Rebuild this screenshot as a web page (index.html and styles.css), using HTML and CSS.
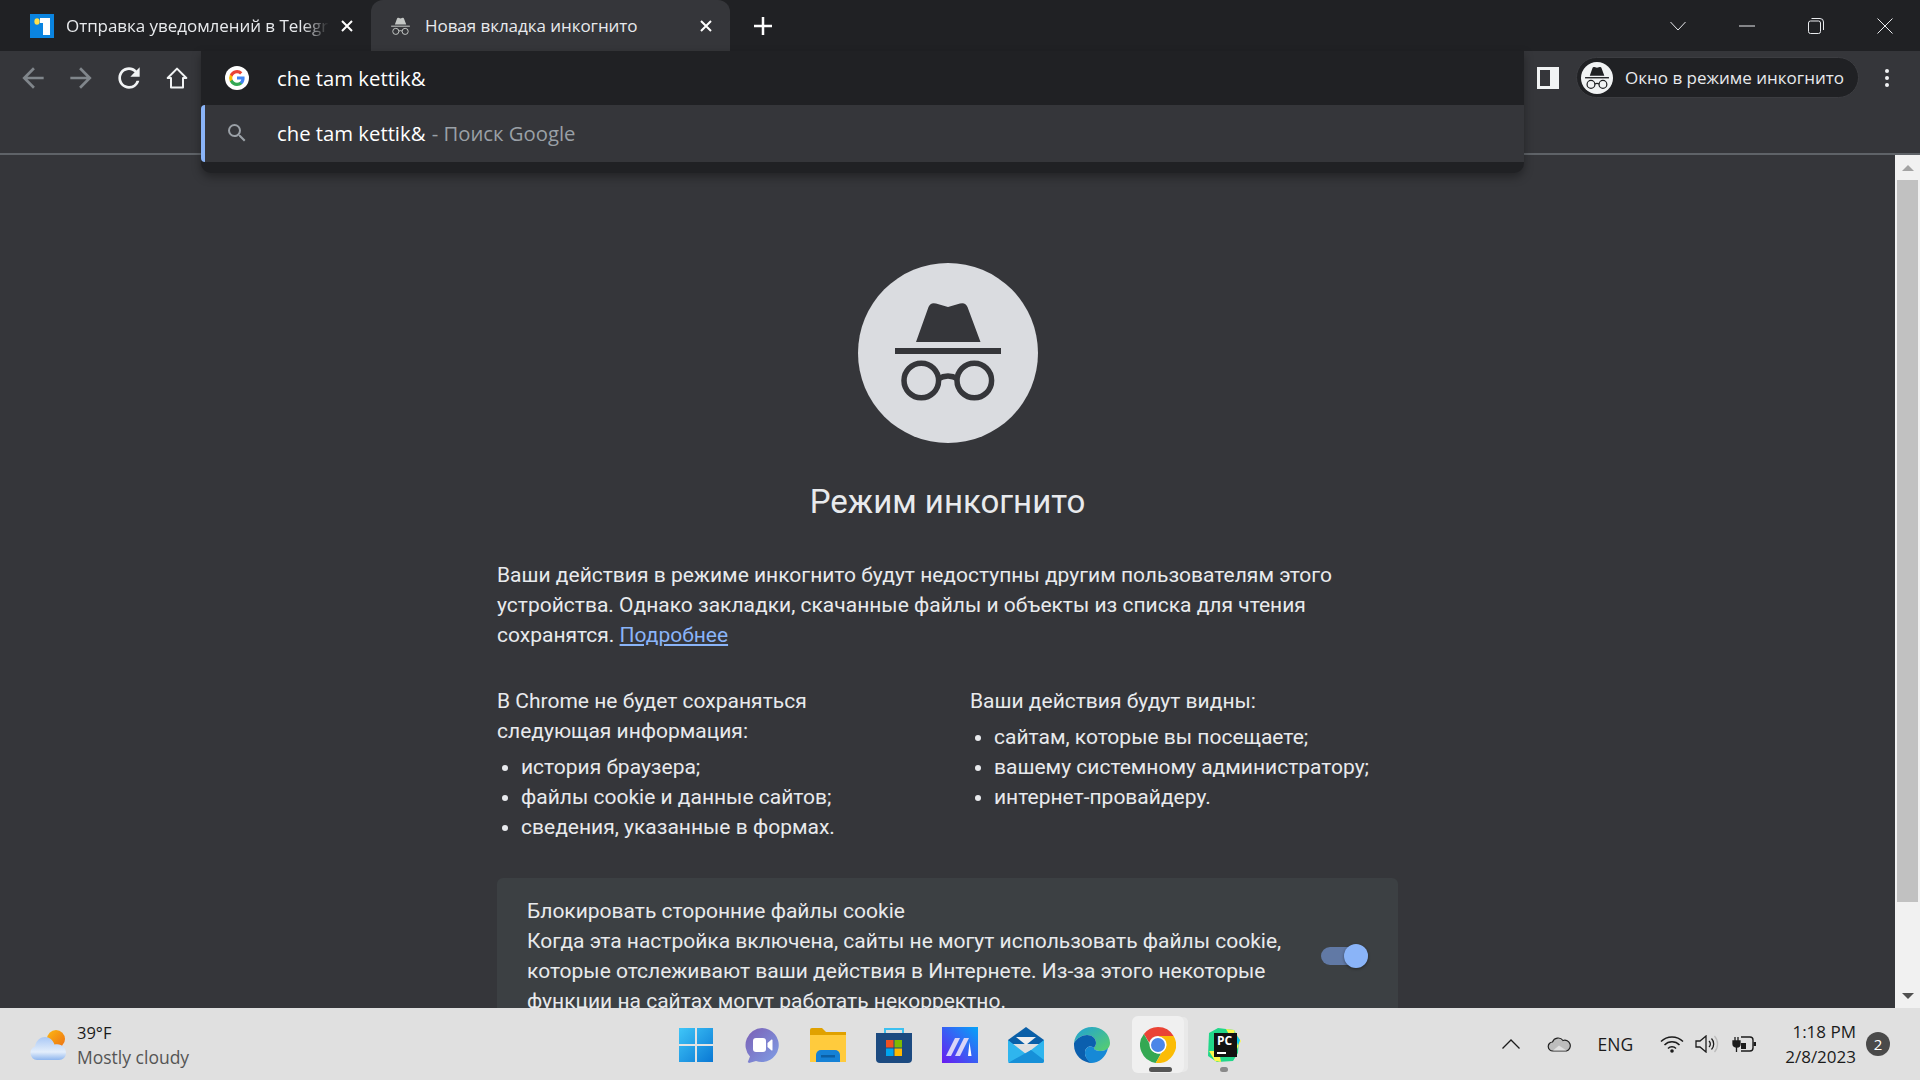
FILE: index.html
```html
<!DOCTYPE html>
<html lang="ru">
<head>
    <meta charset="UTF-8">
    <title>Новая вкладка инкогнито</title>
    <link rel="stylesheet" href="styles.css">
</head>
<body>
    <svg class="defs" width="0" height="0">
        <symbol id="spy" viewBox="0 0 106 102">
            <path d="M21 43 L33.500 8 Q35.500 3 41 4.500 L53 8 L65 4.500 Q70.500 3 72.500 8 L85.500 43 Z"/>
            <rect x="0" y="49" width="106" height="6"/>
            <g fill="none" stroke="currentColor" stroke-width="5.500">
                <circle cx="26.300" cy="81.500" r="17.300"/>
                <circle cx="79.300" cy="81.500" r="17.300"/>
                <path d="M43 80 Q53 74 63 80"/>
            </g>
        </symbol>
    </svg>

    <div class="tabstrip">
        <div class="tab tab-first">
            <svg class="favicon" viewBox="0 0 24 24"><rect width="24" height="24" fill="#0a84e0"/><rect x="13" y="4" width="7" height="17" fill="#fff"/><path d="M10 4h3v5h-3z" fill="#fff"/><ellipse cx="7" cy="7.500" rx="2.600" ry="3.200" fill="#ffe04a"/></svg>
            <span class="tab-title fade">Отправка уведомлений в Telegram</span>
            <svg class="tab-close" viewBox="0 0 12 12"><path d="M1 1l10 10M11 1L1 11"/></svg>
        </div>
        <div class="tab tab-active">
            <svg class="tab-spy"><use href="#spy"/></svg>
            <span class="tab-title">Новая вкладка инкогнито</span>
            <svg class="tab-close" viewBox="0 0 12 12"><path d="M1 1l10 10M11 1L1 11"/></svg>
        </div>
        <svg class="new-tab" viewBox="0 0 18 18"><path d="M9 0v18M0 9h18"/></svg>
        <div class="win-controls">
            <svg class="win-btn chevron" viewBox="0 0 16 10"><path d="M.5 1L8 9l7.500-8"/></svg>
            <svg class="win-btn minimize" viewBox="0 0 16 2"><path d="M0 1h16"/></svg>
            <svg class="win-btn restore" viewBox="0 0 16 16"><rect x=".5" y="3" width="12" height="12.500" rx="2"/><path d="M3.500.5H12a3.500 3.500 0 0 1 3.500 3.500v8"/></svg>
            <svg class="win-btn close" viewBox="0 0 16 16"><path d="M.5.5l15 15M15.500.5l-15 15"/></svg>
        </div>
    </div>

    <div class="toolbar">
        <div class="nav">
            <svg class="nav-icon dim" viewBox="0 0 24 24"><path d="M20 11H7.830l5.590-5.590L12 4l-8 8 8 8 1.410-1.410L7.830 13H20v-2z"/></svg>
            <svg class="nav-icon dim" viewBox="0 0 24 24"><path d="M12 4l-1.410 1.410L16.170 11H4v2h12.170l-5.580 5.590L12 20l8-8z"/></svg>
            <svg class="nav-icon" viewBox="0 0 24 24"><path d="M17.650 6.350A7.958 7.958 0 0 0 12 4c-4.420 0-7.990 3.580-7.990 8s3.570 8 7.990 8c3.730 0 6.840-2.550 7.730-6h-2.080A5.990 5.990 0 0 1 12 18c-3.310 0-6-2.690-6-6s2.690-6 6-6c1.660 0 3.140.69 4.220 1.780L13 11h7V4l-2.350 2.350z"/></svg>
            <svg class="nav-icon" viewBox="0 0 24 24"><path d="M12 5L5 12H7.500V19.200H16.500V12H19Z" fill="none" stroke="currentColor" stroke-width="1.500" stroke-linejoin="round"/></svg>
        </div>
        <div class="tool-right">
            <svg class="side-panel" viewBox="0 0 22 22"><path fill-rule="evenodd" d="M0 0h22v22H0zM3 3v16h10V3z"/></svg>
            <div class="profile">
                <span class="profile-pic"><svg><use href="#spy"/></svg></span>
                <span>Окно в режиме инкогнито</span>
            </div>
            <div class="dots"><i></i><i></i><i></i></div>
        </div>

        <div class="omnibox">
            <div class="omni-input">
                <svg class="google" viewBox="0 0 24 24">
                    <circle cx="12" cy="12" r="12" fill="#fff"/>
                    <path d="M19.600 12.200c0-.6-.05-1.100-.15-1.600H12v3h4.300a3.700 3.700 0 0 1-1.600 2.400v2h2.550c1.500-1.400 2.350-3.400 2.350-5.800z" fill="#4285f4"/>
                    <path d="M12 20c2.150 0 3.950-.7 5.250-1.950l-2.550-2c-.7.500-1.600.75-2.700.75-2.100 0-3.850-1.400-4.500-3.300H4.900v2.050A8 8 0 0 0 12 20z" fill="#34a853"/>
                    <path d="M7.500 13.500a4.800 4.800 0 0 1 0-3V8.450H4.900a8 8 0 0 0 0 7.100z" fill="#fbbc05"/>
                    <path d="M12 7.200c1.200 0 2.250.4 3.100 1.200l2.250-2.250A8 8 0 0 0 4.900 8.450L7.500 10.500c.65-1.900 2.400-3.300 4.500-3.300z" fill="#ea4335"/>
                </svg>
                <span>che tam kettik&amp;</span>
            </div>
            <div class="omni-row">
                <svg class="search" viewBox="0 0 24 24"><path d="M15.500 14h-.790l-.280-.270A6.471 6.471 0 0 0 16 9.500 6.500 6.500 0 1 0 9.500 16c1.610 0 3.090-.590 4.230-1.570l.270.280v.790l5 4.990L20.490 19l-4.990-5zm-6 0C7.010 14 5 11.990 5 9.500S7.010 5 9.500 5 14 7.010 14 9.500 11.990 14 9.500 14z"/></svg>
                <span>che tam kettik&amp;</span>
                <span class="omni-hint">&nbsp;- Поиск Google</span>
            </div>
        </div>
    </div>

    <div class="main">
        <div class="page">
            <div class="content">
                <div class="spy-circle"><svg><use href="#spy"/></svg></div>
                <h1>Режим инкогнито</h1>
                <p class="intro">Ваши действия в режиме инкогнито будут недоступны другим пользователям этого устройства. Однако закладки, скачанные файлы и объекты из списка для чтения сохранятся. <a href="#">Подробнее</a></p>
                <div class="columns">
                    <div class="column">
                        <p>В Chrome не будет сохраняться следующая информация:</p>
                        <ul>
                            <li>история браузера;</li>
                            <li>файлы cookie и данные сайтов;</li>
                            <li>сведения, указанные в формах.</li>
                        </ul>
                    </div>
                    <div class="column column-right">
                        <p>Ваши действия будут видны:</p>
                        <ul>
                            <li>сайтам, которые вы посещаете;</li>
                            <li>вашему системному администратору;</li>
                            <li>интернет-провайдеру.</li>
                        </ul>
                    </div>
                </div>
                <div class="cookie-card">
                    <div class="cookie-text">
                        <div>Блокировать сторонние файлы cookie</div>
                        <div>Когда эта настройка включена, сайты не могут использовать файлы cookie, которые отслеживают ваши действия в Интернете. Из-за этого некоторые функции на сайтах могут работать некорректно.</div>
                    </div>
                    <div class="toggle"><i></i></div>
                </div>
            </div>
        </div>
        <div class="scrollbar">
            <div class="arrow arrow-up"></div>
            <div class="track"><div class="thumb"></div></div>
            <div class="arrow arrow-down"></div>
        </div>
    </div>

    <div class="taskbar">
        <div class="weather">
            <svg class="weather-icon" viewBox="0 0 36 30">
                <defs>
                    <linearGradient id="cloud" x1="0" y1="0" x2="0" y2="1"><stop offset="0" stop-color="#a9c8f5"/><stop offset=".65" stop-color="#e4eefb"/><stop offset="1" stop-color="#8fb6ee"/></linearGradient>
                    <linearGradient id="sun" x1="0" y1="0" x2="1" y2="1"><stop offset="0" stop-color="#fdb813"/><stop offset="1" stop-color="#ec6f14"/></linearGradient>
                </defs>
                <circle cx="26" cy="9" r="9" fill="url(#sun)"/>
                <path d="M7 30a7 7 0 0 1-2-13.500C6 10 11 7 15 7c4.500 0 8 3 9.500 7.500C31 13 36 17 36 23c0 4-3 7-7 7z" fill="url(#cloud)"/>
            </svg>
            <div>
                <div class="temp">39°F</div>
                <div class="forecast">Mostly cloudy</div>
            </div>
        </div>

        <div class="apps">
            <div class="app">
                <svg viewBox="0 0 36 36"><defs><linearGradient id="win" x1="0" y1="0" x2="1" y2="1"><stop offset="0" stop-color="#3fc6f8"/><stop offset="1" stop-color="#0a78d4"/></linearGradient></defs><path fill="url(#win)" d="M1 1h34v34H1z"/><path d="M17 1h2v34h-2zM1 17h34v2H1z" fill="#e3e3e3"/></svg>
            </div>
            <div class="app">
                <svg viewBox="0 0 36 36"><defs><linearGradient id="teams" x1="0" y1="0" x2="1" y2="1"><stop offset="0" stop-color="#7b5fb5"/><stop offset="1" stop-color="#7f9fe6"/></linearGradient></defs><path fill="url(#teams)" d="M18 1a17 17 0 1 1-6 33l-7 2c-1 0-1.500-.7-1-1.500l2-5A17 17 0 0 1 18 1z"/><rect x="9" y="11" width="13" height="14" rx="3" fill="#fff"/><path d="M23.500 16l4-3.500c.5-.3 1 0 1 .5v10c0 .5-.5.8-1 .5l-4-3.500z" fill="#fff"/></svg>
            </div>
            <div class="app">
                <svg viewBox="0 0 36 36"><path d="M0 3a2 2 0 0 1 2-2h10l4 4h20v30H0z" fill="#e0a100"/><path d="M0 8h36v27H0z" fill="#ffcb3d"/><path d="M6 35v-7a5 5 0 0 1 5-5h14a5 5 0 0 1 5 5v7z" fill="#1581d6"/><rect x="11" y="28" width="14" height="2.500" fill="#0b5fa5"/></svg>
            </div>
            <div class="app">
                <svg viewBox="0 0 36 36"><path d="M9 6V2h18v4" fill="none" stroke="#3cc0f0" stroke-width="2"/><path d="M0 6h36v26a4 4 0 0 1-4 4H4a4 4 0 0 1-4-4z" fill="#1c4a80"/><rect x="10" y="13" width="7.500" height="7.500" fill="#f05022"/><rect x="18.500" y="13" width="7.500" height="7.500" fill="#7fba00"/><rect x="10" y="21.500" width="7.500" height="7.500" fill="#00a4ef"/><rect x="18.500" y="21.500" width="7.500" height="7.500" fill="#ffb900"/></svg>
            </div>
            <div class="app">
                <svg viewBox="0 0 36 36"><defs><linearGradient id="mai" x1="0" y1="1" x2="1" y2="0"><stop offset="0" stop-color="#6a1bf0"/><stop offset="1" stop-color="#06a4f8"/></linearGradient></defs><rect width="36" height="36" fill="url(#mai)"/><path d="M4 29l9-18h5l-9 18zM13 29l9-18h5l-9 18z" fill="#d8d4f8"/><path d="M26 29l1.500-14 2 14z" fill="#fff"/></svg>
            </div>
            <div class="app">
                <svg viewBox="0 0 36 36"><path d="M0 13L18 0l18 13v4H0z" fill="#0a5fa8"/><path d="M8 10h20l-10 8z" fill="#eee"/><path d="M0 13l18 14 18-14v21a2 2 0 0 1-2 2H2a2 2 0 0 1-2-2z" fill="#2fb5ee"/><path d="M36 33L23 23 0 36h34a2 2 0 0 0 2-2z" fill="#1690d8"/></svg>
            </div>
            <div class="app">
                <svg viewBox="0 0 36 36"><defs><linearGradient id="edge" x1="0" y1="0" x2="1" y2="1"><stop offset="0" stop-color="#1fa0d8"/><stop offset="1" stop-color="#59d06a"/></linearGradient></defs><path fill="url(#edge)" d="M18 0c10 0 18 7 18 16 0 5-4 8-9 8-4 0-7-1-7-3 0-1 2-2 2-5 0-5-4-8-9-8C8 8 3 11 0 16 1 7 8 0 18 0z"/><path fill="#0b5fae" d="M0 16c3-5 8-8 13-8 5 0 9 3 9 8 0 3-2 4-2 5-4-3-9-1-9 5 0 4 3 8 8 10C8 36 0 28 0 18z"/><path fill="#1689d6" d="M11 26c0-6 5-8 9-5 0 2 3 3 7 3 3 0 5-1 7-3-2 9-9 15-17 15-3-2-6-6-6-10z"/></svg>
            </div>
            <div class="app app-open">
                <svg viewBox="0 0 36 36">
                    <path d="M18 0a18 18 0 0 1 15.600 9H18a9 9 0 0 0-8.700 6.700L3.900 7A18 18 0 0 1 18 0z" fill="#ea4335"/>
                    <path d="M3.900 7l6.300 11a9 9 0 0 0 10.800 8.500L15.700 35.900A18 18 0 0 1 3.900 7z" fill="#34a853"/>
                    <path d="M33.600 9A18 18 0 0 1 15.700 35.900l6.300-10.900A9 9 0 0 0 25 12.700L18 9z" fill="#fbbc05"/>
                    <circle cx="18" cy="18" r="8.500" fill="#fff"/>
                    <circle cx="18" cy="18" r="7" fill="#4a86e8"/>
                </svg>
                <i class="app-bar"></i>
            </div>
            <div class="app">
                <svg viewBox="0 0 36 36"><path d="M3 6L12 1l16 2 5 9-1 14-5 8-16 1-9-6z" fill="#21d789"/><path d="M20 2l8 1 7 11-4 8z" fill="#fcf84a"/><path d="M28 4l6 9-2 6z" fill="#07c3f2"/><path d="M3 24l6 10 6 1-2-11z" fill="#fcf84a"/><rect x="8" y="6" width="23" height="24" fill="#111"/><rect x="11" y="25" width="9" height="2" fill="#fff"/><text x="11" y="18" class="pc-text">PC</text></svg>
                <i class="app-dot"></i>
            </div>
        </div>

        <div class="tray">
            <svg class="tray-chevron" viewBox="0 0 18 10"><path d="M.5 9.500L9 1l8.500 8.500"/></svg>
            <svg class="tray-cloud" viewBox="0 0 24 16"><path d="M6 15a4.500 4.500 0 0 1-.5-9A6 6 0 0 1 16 4.500 5 5 0 0 1 19.500 15z" fill="#bdbdbd" stroke="#222" stroke-width="1.200"/><path d="M6 14.400l6-5 7.500 5z" fill="#e0e0e0"/></svg>
            <span class="lang">ENG</span>
            <svg class="tray-wifi" viewBox="0 0 24 18"><g fill="none" stroke="#1c1c1c" stroke-width="1.500"><path d="M1 6.500a15.500 15.500 0 0 1 22 0"/><path d="M4.500 10a10.500 10.500 0 0 1 15 0"/><path d="M8 13.500a5.500 5.500 0 0 1 8 0"/></g><circle cx="12" cy="16" r="1.800" fill="#1c1c1c"/></svg>
            <svg class="tray-sound" viewBox="0 0 24 18"><path d="M1 6h4l6-5v16l-6-5H1z" fill="none" stroke="#1c1c1c" stroke-width="1.300"/><path d="M14 6a4 4 0 0 1 0 6M16.500 3.500a8 8 0 0 1 0 11" fill="none" stroke="#1c1c1c" stroke-width="1.300"/><path d="M19.500 1a12 12 0 0 1 0 16" fill="none" stroke="#bbb" stroke-width="1.300"/></svg>
            <svg class="tray-battery" viewBox="0 0 24 18"><path d="M1 6h7v3a3 3 0 0 1-3 3H4a3 3 0 0 1-3-3zM3 2v4M6 2v4M4.500 12v5" fill="#1c1c1c" stroke="#1c1c1c" stroke-width="1.300"/><path d="M9 2h9a3 3 0 0 1 3 3v8a3 3 0 0 1-3 3H9" fill="none" stroke="#1c1c1c" stroke-width="1.400"/><rect x="9" y="8" width="5" height="6" fill="#1c1c1c"/><rect x="21.500" y="7" width="2.500" height="4" fill="#1c1c1c"/></svg>
            <div class="clock">
                <div>1:18 PM</div>
                <div>2/8/2023</div>
            </div>
            <span class="badge">2</span>
        </div>
    </div>
</body>
</html>
```

FILE: styles.css
```css
* {
    box-sizing: border-box;
}

body {
    margin: 0;
    width: 1920px;
    height: 1080px;
    overflow: hidden;
    display: flex;
    flex-direction: column;
    background-color: #35363a;
    color: #e8eaed;
    font-family: Roboto, "Liberation Sans", sans-serif;
}

.defs {
    position: absolute;
}

/* tab strip */
.tabstrip {
    height: 51px;
    flex: none;
    display: flex;
    align-items: center;
    background-color: #202124;
    font-family: "Open Sans", "Liberation Sans", sans-serif;
    font-size: 17px;
    letter-spacing: -0.05px;
}

.tab {
    width: 359px;
    height: 51px;
    display: flex;
    align-items: center;
    padding: 0 18px 0 30px;
    color: #e8eaed;
}

.tab-first {
    width: 371px;
}

.tab-active {
    background-color: #35363a;
    border-radius: 12px 12px 0 0;
    padding-left: 20px;
}

.favicon {
    width: 24px;
    height: 24px;
    flex: none;
}

.tab-spy {
    width: 19px;
    height: 18px;
    flex: none;
    fill: #c4c7c5;
    color: #c4c7c5;
}

.tab-title {
    flex: 1;
    white-space: nowrap;
    overflow: hidden;
    margin-left: 12px;
    margin-right: 12px;
}

.tab-active .tab-title {
    margin-left: 15px;
}

.fade {
    -webkit-mask-image: linear-gradient(to right, #000 90%, transparent 100%);
    mask-image: linear-gradient(to right, #000 90%, transparent 100%);
}

.tab-close {
    width: 12px;
    height: 12px;
    flex: none;
    fill: none;
    stroke: #fff;
    stroke-width: 2;
}

.new-tab {
    width: 18px;
    height: 18px;
    margin-left: 24px;
    fill: none;
    stroke: #fff;
    stroke-width: 2.500;
}

.win-controls {
    margin-left: auto;
    display: flex;
    align-items: center;
    gap: 53px;
    padding-right: 27px;
}

.win-btn {
    width: 16px;
    fill: none;
    stroke: #e8eaed;
    stroke-width: 1;
}

.chevron {
    height: 10px;
}

.minimize {
    height: 2px;
}

.restore,
.close {
    height: 16px;
}

/* toolbar */
.toolbar {
    position: relative;
    height: 104px;
    flex: none;
    display: flex;
    justify-content: space-between;
    align-items: flex-start;
    padding: 6px 31px 0 17px;
    border-bottom: 2px solid #5f6368;
}

.nav {
    display: flex;
    align-items: center;
    gap: 16px;
    height: 41px;
}

.nav-icon {
    width: 32px;
    height: 32px;
    fill: #f1f3f4;
    color: #f1f3f4;
}

.dim {
    fill: #80868b;
}

.tool-right {
    display: flex;
    align-items: center;
    height: 41px;
}

.side-panel {
    width: 22px;
    height: 22px;
    fill: #f1f3f4;
    margin-right: 17px;
}

.profile {
    width: 283px;
    height: 41px;
    display: flex;
    align-items: center;
    gap: 12px;
    padding-left: 4px;
    border-radius: 21px;
    background-color: #202124;
    border: 1px solid #3c3d41;
    font-family: "Open Sans", "Liberation Sans", sans-serif;
    font-size: 17px;
    white-space: nowrap;
}

.profile-pic {
    width: 32px;
    height: 32px;
    border-radius: 50%;
    background-color: #f1f3f4;
    display: flex;
    align-items: center;
    justify-content: center;
    color: #202124;
    fill: #202124;
}

.profile-pic svg {
    width: 24px;
    height: 23px;
}

.dots {
    display: flex;
    flex-direction: column;
    gap: 3px;
    margin-left: 26px;
}

.dots i {
    width: 4px;
    height: 4px;
    border-radius: 50%;
    background-color: #f1f3f4;
}

/* suggestions drop down, lies over the toolbar */
.omnibox {
    position: absolute;
    left: 201px;
    top: 0;
    width: 1323px;
    height: 122px;
    background-color: #202124;
    border-radius: 0 0 10px 10px;
    box-shadow: 0 4px 10px rgba(0, 0, 0, 0.35);
    font-family: "Open Sans", "Liberation Sans", sans-serif;
    font-size: 20.300px;
    z-index: 2;
}

.omni-input {
    height: 54px;
    display: flex;
    align-items: center;
    padding-left: 24px;
    color: #fff;
}

.google {
    width: 24px;
    height: 24px;
    margin-right: 28px;
}

.omni-row {
    height: 57px;
    display: flex;
    align-items: center;
    padding: 0 0 1px 24px;
    background-color: #35363a;
    border-left: 4px solid #8ab4f8;
    border-radius: 4px 0 0 4px;
    color: #fff;
}

.search {
    width: 24px;
    height: 24px;
    margin-left: -4px;
    margin-right: 28px;
    fill: #9aa0a6;
}

.omni-hint {
    margin-left: 1px;
    color: #9aa0a6;
}

/* page */
.main {
    flex: 1;
    min-height: 0;
    display: flex;
}

.page {
    flex: 1;
    min-width: 0;
    overflow: hidden;
    display: flex;
    justify-content: center;
}

.content {
    width: 901px;
    padding-top: 108px;
    font-size: 21px;
    line-height: 30px;
}

.spy-circle {
    width: 180px;
    height: 180px;
    margin: 0 auto;
    border-radius: 50%;
    background-color: #dadce0;
    display: flex;
    align-items: center;
    justify-content: center;
    color: #35363a;
    fill: #35363a;
}

.spy-circle svg {
    width: 106px;
    height: 102px;
    margin-bottom: 6px;
}

h1 {
    margin: 39px 0 0;
    font-size: 33px;
    line-height: 40px;
    font-weight: 400;
    text-align: center;
}

p {
    margin: 0;
}

.intro {
    margin-top: 38px;
}

a {
    color: #8ab4f8;
}

.columns {
    display: flex;
    margin-top: 36px;
}

.column {
    width: 473px;
    padding-right: 60px;
}

.column-right {
    width: 428px;
    padding-right: 0;
}

ul {
    margin: 6px 0 0;
    padding-left: 24px;
}

.cookie-card {
    margin-top: 36px;
    padding: 18px 30px;
    display: flex;
    align-items: center;
    gap: 20px;
    background-color: #3c4043;
    border-radius: 6px;
}

.cookie-text {
    flex: 1;
}

.toggle {
    position: relative;
    width: 47px;
    height: 18px;
    flex: none;
    border-radius: 9px;
    background-color: #6179a5;
}

.toggle i {
    position: absolute;
    right: 0;
    top: -3px;
    width: 24px;
    height: 24px;
    border-radius: 50%;
    background-color: #8ab4f8;
    box-shadow: 0 1px 3px rgba(0, 0, 0, 0.4);
}

/* scrollbar */
.scrollbar {
    width: 25px;
    flex: none;
    display: flex;
    flex-direction: column;
    background-color: #f1f1f1;
}

.arrow {
    height: 25px;
    flex: none;
    display: flex;
    align-items: center;
    justify-content: center;
}

.arrow::after {
    content: "";
    border-left: 6px solid transparent;
    border-right: 6px solid transparent;
}

.arrow-up::after {
    border-bottom: 6px solid #a3a3a3;
}

.arrow-down::after {
    border-top: 6px solid #505050;
}

.track {
    flex: 1;
    padding: 0 2px;
}

.thumb {
    height: 722px;
    background-color: #c1c1c1;
}

/* taskbar */
.taskbar {
    height: 72px;
    flex: none;
    display: grid;
    grid-template-columns: 1fr auto 1fr;
    align-items: center;
    background-color: #e0e0e0;
    color: #1b1b1b;
    font-family: "Open Sans", "Liberation Sans", sans-serif;
}

.weather {
    display: flex;
    align-items: center;
    gap: 11px;
    padding: 2px 0 0 30px;
}

.weather-icon {
    width: 36px;
    height: 30px;
}

.temp {
    font-size: 16.500px;
    line-height: 25px;
}

.forecast {
    font-size: 17.500px;
    line-height: 25px;
    color: #555;
}

.apps {
    display: flex;
    align-items: center;
    padding-top: 1px;
}

.app {
    position: relative;
    width: 66px;
    height: 57px;
    display: flex;
    align-items: center;
    justify-content: center;
}

.app > svg {
    width: 36px;
    height: 36px;
}

.app-open {
    background-color: #f0f0f0;
    border-radius: 6px;
    width: 52px;
    margin: 0 7px;
    box-shadow: 5px 0 0 -1px #e9e9e9;
}

.app-bar {
    position: absolute;
    bottom: 1px;
    left: 17px;
    width: 23px;
    height: 5px;
    border-radius: 3px;
    background-color: #555;
}

.app-dot {
    position: absolute;
    bottom: 1px;
    left: 29px;
    width: 8px;
    height: 5px;
    border-radius: 3px;
    background-color: #8a8a8a;
}

.pc-text {
    font-family: "Open Sans", "Liberation Sans", sans-serif;
    font-size: 12px;
    font-weight: 700;
    fill: #fff;
}

.tray {
    display: flex;
    align-items: center;
    justify-content: flex-end;
    padding-right: 30px;
}

.tray svg {
    flex: none;
}

.tray-chevron {
    width: 18px;
    height: 10px;
    fill: none;
    stroke: #1c1c1c;
    stroke-width: 1.300;
    margin-right: 27px;
}

.tray-cloud {
    width: 24px;
    height: 16px;
    margin-right: 27px;
}

.lang {
    font-size: 17.500px;
    margin-right: 27px;
}

.tray-wifi {
    width: 24px;
    height: 18px;
    margin-right: 11px;
}

.tray-sound {
    width: 24px;
    height: 18px;
    margin-right: 13px;
}

.tray-battery {
    width: 24px;
    height: 18px;
    margin-right: 29px;
}

.clock {
    font-size: 17px;
    line-height: 25px;
    text-align: right;
}

.badge {
    width: 24px;
    height: 24px;
    margin-left: 10px;
    border-radius: 50%;
    background-color: #4a4a4a;
    color: #fff;
    font-size: 15px;
    text-align: center;
    line-height: 24px;
}
```
